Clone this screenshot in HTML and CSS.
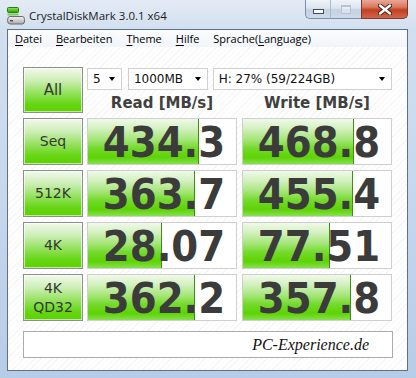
FILE: index.html
```html
<!DOCTYPE html>
<html lang="de">
<head>
<meta charset="utf-8">
<title>CrystalDiskMark 3.0.1 x64</title>
<link rel="stylesheet" href="styles.css">
</head>
<body>
<div class="window">
  <div class="titlebar">
    <svg class="app-icon" width="18" height="18" viewBox="0 0 18 18">
      <defs>
        <linearGradient id="g1" x1="0" y1="0" x2="0" y2="1">
          <stop offset="0" stop-color="#8ee85a"/>
          <stop offset="1" stop-color="#2aa000"/>
        </linearGradient>
        <linearGradient id="g2" x1="0" y1="0" x2="0" y2="1">
          <stop offset="0" stop-color="#f4f4f4"/>
          <stop offset="1" stop-color="#a8a8a8"/>
        </linearGradient>
      </defs>
      <rect x="0.5" y="0.5" width="11" height="5" rx="1" fill="url(#g1)" stroke="#2f7a10" stroke-width="1"/>
      <rect x="0.5" y="6.5" width="11" height="2" fill="#7cc95a"/>
      <path d="M3 9.5 H15.5 Q17.5 9.5 17.5 12.5 V14 Q17.5 17 15.5 17 H3 Q0.5 17 0.5 13.25 Q0.5 9.5 3 9.5 Z" fill="url(#g2)" stroke="#6a6a6a" stroke-width="1"/>
      <rect x="3" y="13" width="3" height="1.5" fill="#555"/>
    </svg>
    <span class="title">CrystalDiskMark 3.0.1 x64</span>
    <div class="caption">
      <div class="cap-btn cap-min"><span class="min-glyph"></span></div>
      <div class="cap-btn cap-max"><span class="max-glyph"></span></div>
      <div class="cap-btn cap-close">
        <svg width="14" height="11" viewBox="0 0 14 11">
          <path d="M2 1.5 L12 9.5 M12 1.5 L2 9.5" stroke="#3b1f1a" stroke-width="4.2" stroke-linecap="round"/>
          <path d="M2 1.5 L12 9.5 M12 1.5 L2 9.5" stroke="#ffffff" stroke-width="2.4" stroke-linecap="round"/>
        </svg>
      </div>
    </div>
  </div>
  <div class="client">
    <div class="menubar">
      <span class="menu-item"><u>D</u>atei</span>
      <span class="menu-item"><u>B</u>earbeiten</span>
      <span class="menu-item"><u>T</u>heme</span>
      <span class="menu-item"><u>H</u>ilfe</span>
      <span class="menu-item">Sprache(<u>L</u>anguage)</span>
    </div>
    <div class="bench">
      <div class="top">
        <div class="btn btn-all">All</div>
        <div class="controls">
          <div class="selects">
            <div class="sel sel-count"><span>5</span><span class="arrow"></span></div>
            <div class="sel sel-size"><span>1000MB</span><span class="arrow"></span></div>
            <div class="sel sel-drive"><span>H: 27% (59/224GB)</span><span class="arrow"></span></div>
          </div>
          <div class="heads">
            <div class="head">Read [MB/s]</div>
            <div class="head">Write [MB/s]</div>
          </div>
        </div>
      </div>
      <div class="row">
        <div class="btn">Seq</div>
        <div class="res"><span class="fill" style="width:110px"></span><span class="val">434.3</span></div>
        <div class="res"><span class="fill" style="width:110px"></span><span class="val">468.8</span></div>
      </div>
      <div class="row">
        <div class="btn">512K</div>
        <div class="res"><span class="fill" style="width:106px"></span><span class="val">363.7</span></div>
        <div class="res"><span class="fill" style="width:109px"></span><span class="val">455.4</span></div>
      </div>
      <div class="row">
        <div class="btn">4K</div>
        <div class="res"><span class="fill" style="width:73px"></span><span class="val">28.07</span></div>
        <div class="res"><span class="fill" style="width:86px"></span><span class="val">77.51</span></div>
      </div>
      <div class="row">
        <div class="btn btn-two">4K<br>QD32</div>
        <div class="res"><span class="fill" style="width:106px"></span><span class="val">362.2</span></div>
        <div class="res"><span class="fill" style="width:107px"></span><span class="val">357.8</span></div>
      </div>
      <div class="footer"><span class="brand">PC-Experience.de</span></div>
    </div>
  </div>
</div>
</body>
</html>
```
FILE: styles.css
```css
html, body {
  margin: 0;
  padding: 0;
  overflow: hidden;
}

.window {
  width: 416px;
  height: 378px;
  box-sizing: border-box;
  padding: 0 8px 7px 7px;
  display: flex;
  flex-direction: column;
  background: linear-gradient(180deg, #e3ebf5 0px, #d2dfef 30px, #c6d7ec 200px, #b7cce6 378px);
}

.titlebar {
  height: 29px;
  display: flex;
  align-items: flex-start;
  flex-shrink: 0;
}

.app-icon {
  margin-top: 7px;
  flex-shrink: 0;
}

.title {
  margin-left: 4px;
  margin-top: 7px;
  font-family: "Open Sans", "Noto Sans", sans-serif;
  font-size: 11.5px;
  line-height: 18px;
  color: #1b1b1b;
}

.caption {
  margin-left: auto;
  display: flex;
  height: 19px;
}

.cap-btn {
  height: 19px;
  box-sizing: border-box;
  display: flex;
  align-items: center;
  justify-content: center;
}

.cap-min {
  width: 25px;
  border: 1px solid #7d8ea6;
  border-top: none;
  border-right: none;
  border-bottom-left-radius: 5px;
  background: linear-gradient(180deg, #eef3f9 0%, #dce5f0 45%, #c4d1e2 55%, #cfdbea 100%);
}

.cap-max {
  width: 31px;
  border-bottom: 1px solid #7d8ea6;
  border-left: 1px solid #a9b8cc;
  background: linear-gradient(180deg, #eef3f9 0%, #dce5f0 45%, #c4d1e2 55%, #cfdbea 100%);
}

.cap-close {
  width: 47px;
  border: 1px solid #7a3a30;
  border-top: none;
  border-bottom-right-radius: 5px;
  background: linear-gradient(180deg, #e9a797 0%, #d9775f 40%, #c23f22 55%, #d1674a 100%);
}

.min-glyph {
  width: 9px;
  height: 3px;
  margin-top: 5px;
  background: #ffffff;
  border: 1px solid #3b4b63;
}

.max-glyph {
  width: 8px;
  height: 6px;
  border: 1px solid #b6c3d4;
  border-top-width: 2px;
  background: rgba(255, 255, 255, 0.35);
}

.client {
  flex: 1;
  border: 1px solid #5d718f;
  background: #ffffff;
  display: flex;
  flex-direction: column;
  min-height: 0;
}

.menubar {
  height: 17px;
  display: flex;
  align-items: center;
  gap: 14px;
  padding-left: 7px;
  background: linear-gradient(180deg, #fbfcfe, #f1f5fa);
  font-family: "Open Sans", "Noto Sans", sans-serif;
  font-size: 11px;
  color: #000;
  flex-shrink: 0;
}

.menu-item u {
  text-decoration-thickness: 1px;
  text-underline-offset: 2px;
}

.bench {
  flex: 1;
  padding: 20px 14px 0 15px;
  display: flex;
  flex-direction: column;
  gap: 5px;
  background: repeating-linear-gradient(135deg, #ffffff 0px, #ffffff 3px, #f6f6f6 3px, #f6f6f6 4px);
}

.top {
  display: flex;
  height: 46px;
}

.btn {
  width: 60px;
  flex-shrink: 0;
  box-sizing: border-box;
  border: 1px solid #8e8e8e;
  box-shadow: inset 0 0 0 1px rgba(255, 255, 255, 0.6);
  background: linear-gradient(180deg, #f1f9ec 0%, #cdeeb6 28%, #92e15a 58%, #66d614 82%, #5cd200 100%);
  display: flex;
  align-items: center;
  justify-content: center;
  text-align: center;
  font-family: "DejaVu Sans", sans-serif;
  font-size: 14px;
  line-height: 19px;
  color: #333833;
  margin-right: 4px;
}

.btn-all {
  font-size: 15px;
}

.controls {
  width: 305px;
  display: flex;
  flex-direction: column;
}

.selects {
  display: flex;
  height: 22px;
  margin-top: 1px;
}

.sel {
  box-sizing: border-box;
  height: 22px;
  border: 1px solid #d0d0d0;
  background: #ffffff;
  display: flex;
  align-items: center;
  justify-content: space-between;
  padding: 0 6px 0 5px;
  font-family: "DejaVu Sans", sans-serif;
  font-size: 12px;
  color: #111;
}

.sel-count { width: 35px; }
.sel-size { width: 80px; margin-left: 6px; }
.sel-drive { width: 180px; margin-left: 5px; padding-left: 5px; }

.arrow {
  width: 0;
  height: 0;
  border-left: 3.5px solid transparent;
  border-right: 3.5px solid transparent;
  border-top: 4px solid #000;
}

.heads {
  display: flex;
  gap: 5px;
  flex: 1;
}

.head {
  width: 150px;
  text-align: center;
  font-family: "DejaVu Sans", sans-serif;
  font-weight: bold;
  font-size: 15px;
  line-height: 18px;
  padding-top: 4px;
  color: #404040;
}

.row {
  display: flex;
  height: 47px;
}

.res {
  position: relative;
  width: 150px;
  box-sizing: border-box;
  border: 1px solid #cfcfcf;
  background: #ffffff;
  display: flex;
  align-items: center;
  justify-content: center;
}

.res + .res {
  margin-left: 5px;
}

.fill {
  position: absolute;
  left: 0;
  top: 0;
  bottom: 0;
  border-right: 1px solid #3f8e1c;
  background: linear-gradient(180deg, #f0f9ea 0%, #d2f0bd 22%, #a6e67a 45%, #74da2c 65%, #5dd304 85%, #86e04c 100%);
}

.val {
  position: relative;
  font-family: "DejaVu Sans Condensed", "DejaVu Sans", sans-serif;
  font-stretch: condensed;
  font-weight: bold;
  font-size: 43px;
  line-height: 43px;
  color: #3b3b3b;
  padding-left: 4px;
  padding-top: 1px;
}

.footer {
  margin-top: 5px;
  height: 27px;
  width: 370px;
  box-sizing: border-box;
  border: 1px solid #ababab;
  background: #ffffff;
  display: flex;
  align-items: center;
  justify-content: flex-end;
  padding-right: 23px;
}

.brand {
  font-family: "Liberation Serif", serif;
  font-style: italic;
  font-size: 16px;
  color: #111;
}
```
